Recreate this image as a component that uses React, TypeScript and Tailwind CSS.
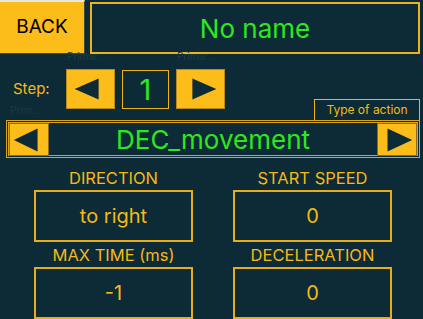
import React from 'react';

const Tri = ({ w, h, pts }: { w: number; h: number; pts: string }) => (
  <svg width={w} height={h} viewBox={`0 0 ${w} ${h}`}>
    <polygon points={pts} fill="#0c2b37" />
  </svg>
);

function Field({ label, value }: { label: string; value: string }) {
  return (
    <div className="flex flex-col">
      <div className="h-[18px] text-center text-[16.5px] leading-[18px] text-[#f5b919]">{label}</div>
      <div className="mt-[3px] flex h-[52px] items-center justify-center border-2 border-[#e9ad1a] text-[20px] text-[#f5b919]">
        {value}
      </div>
    </div>
  );
}

export default function App() {
  return (
    <div
      className="relative h-[319px] w-[423px] overflow-hidden bg-[#0c2b37]"
      style={{ fontFamily: 'Inter, "Liberation Sans", sans-serif' }}
    >
      {/* ghost labels */}
      <div className="absolute left-[67px] top-[49px] text-[10px] text-[#1c3a47]">Primar...</div>
      <div className="absolute left-[177px] top-[49px] text-[10px] text-[#1c3a47]">Primar...</div>
      <div className="absolute left-[10px] top-[103px] text-[10px] text-[#1c3a47]">Prim...</div>

      {/* header */}
      <div className="flex h-[54px]">
        <button className="flex h-[54px] w-[85px] items-center justify-center border-t-2 border-r border-b border-t-[#e6e6e6] border-r-[#3a4a3c] border-b-[#3a4a3c] bg-[#fcbc1a] text-[19px] text-black">
          BACK
        </button>
        <div className="ml-[5px] mr-[3px] mt-[2px] flex h-[52px] flex-1 items-center justify-center border-2 border-[#eeb21a] text-[26px] text-[#2ee81e]">
          No name
        </div>
      </div>

      {/* step */}
      <div className="mt-[15px] flex h-[40px] items-center">
        <div className="w-[66px] pl-[13px] text-[15px] text-[#f5b919]">Step:</div>
        <button className="flex h-[40px] w-[49px] items-center justify-center border border-[#b88a1c] bg-[#fcbc1a]">
          <Tri w={49} h={40} pts="8,20 33,9 33,31" />
        </button>
        <div className="ml-[7px] mt-[1px] flex h-[39px] w-[47px] items-center justify-center border border-[#eeb21a] text-[29px] text-[#2ee81e]">
          1
        </div>
        <button className="ml-[7px] flex h-[40px] w-[49px] items-center justify-center border border-[#b88a1c] bg-[#fcbc1a]">
          <Tri w={49} h={40} pts="16,9 41,20 16,31" />
        </button>
      </div>

      {/* type of action */}
      <div className="-mt-[10px] flex justify-end pr-[3px]">
        <div className="flex h-[21px] w-[106px] items-center justify-center border border-b-0 border-[#eeb21a] text-[12px] text-[#f5b919]">
          Type of action
        </div>
      </div>
      <div className="ml-[6px] mr-[3px] flex h-[38px] items-center border border-[#d9a31c] p-[1px]">
        <div className="flex h-full w-full items-center border border-[#d9a31c]">
          <button className="flex h-[33px] w-[40px] items-center justify-center border border-[#8a6d24] bg-[#fcbc1a]">
            <Tri w={40} h={33} pts="4,17 29,5 29,29" />
          </button>
          <div className="flex-1 text-center text-[26px] text-[#2ee81e]">DEC_movement</div>
          <button className="flex h-[33px] w-[40px] items-center justify-center border border-[#8a6d24] bg-[#fcbc1a]">
            <Tri w={40} h={33} pts="10,5 36,17 10,29" />
          </button>
        </div>
      </div>

      {/* fields */}
      <div className="mt-[11px] grid grid-cols-[159px_159px] gap-x-[40px] gap-y-[4px] pl-[34px]">
        <Field label="DIRECTION" value="to right" />
        <Field label="START SPEED" value="0" />
        <Field label="MAX TIME (ms)" value="-1" />
        <Field label="DECELERATION" value="0" />
      </div>
    </div>
  );
}
